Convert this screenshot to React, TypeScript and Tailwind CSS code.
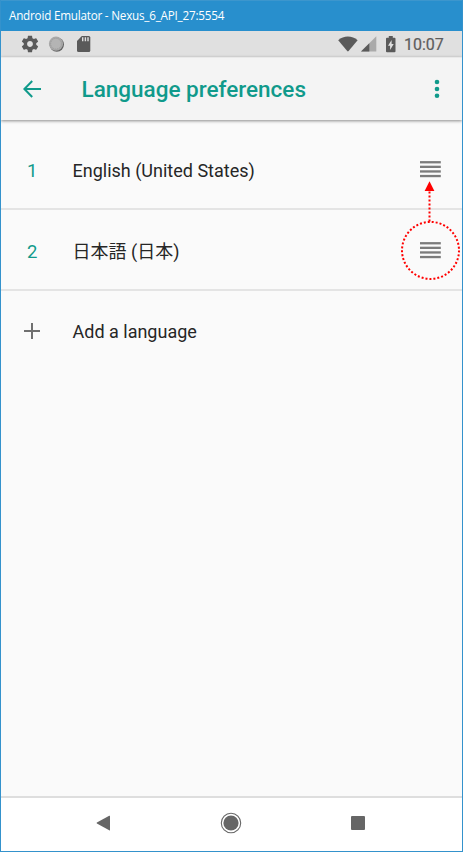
import React from "react";

const roboto = "font-[Roboto,'Noto_Sans_CJK_JP',sans-serif]";

function DragHandle() {
  return (
    <svg className="mb-px h-[17px] w-[22px]" viewBox="0 0 22 17" fill="#7b7b7b">
      <rect x="0" y="0.1" width="20.8" height="2.3" />
      <rect x="0" y="4.7" width="20.8" height="2.3" />
      <rect x="0" y="9.3" width="20.8" height="2.3" />
      <rect x="0" y="13.9" width="20.8" height="2.3" />
    </svg>
  );
}

function LanguageRow({ index, name }: { index: string; name: string }) {
  return (
    <li className="flex h-[81px] items-center border-b-2 border-[#e4e4e4] pr-[20px] pt-[3px]">
      <span className="w-[62.5px] pt-[3px] text-center text-[18.5px] text-[#109a8b]">{index}</span>
      <span className="ml-[9px] flex-1 whitespace-pre pt-px text-[18px] text-[#262626]">{name}</span>
      <DragHandle />
    </li>
  );
}

function StatusBar() {
  return (
    <div className="flex h-[26px] shrink-0 items-center bg-[#e0e0e0] pl-[19px] pr-[15px]">
      <svg className="h-[20px] w-[20px]" viewBox="0 0 24 24" fill="#5a5a5a">
        <path d="M19.43 12.98c.04-.32.07-.64.07-.98s-.03-.66-.07-.98l2.11-1.65c.19-.15.24-.42.12-.64l-2-3.46c-.12-.22-.39-.3-.61-.22l-2.49 1c-.52-.4-1.08-.73-1.69-.98l-.38-2.65C14.46 2.18 14.25 2 14 2h-4c-.25 0-.46.18-.49.42l-.38 2.65c-.61.25-1.17.59-1.69.98l-2.49-1c-.23-.09-.49 0-.61.22l-2 3.46c-.13.22-.07.49.12.64l2.11 1.65c-.04.32-.07.65-.07.98s.03.66.07.98l-2.11 1.65c-.19.15-.24.42-.12.64l2 3.46c.12.22.39.3.61.22l2.49-1c.52.4 1.08.73 1.69.98l.38 2.65c.03.24.24.42.49.42h4c.25 0 .46-.18.49-.42l.38-2.65c.61-.25 1.17-.59 1.69-.98l2.49 1c.23.09.49 0 .61-.22l2-3.46c.12-.22.07-.49-.12-.64l-2.11-1.65zM12 15.5c-1.93 0-3.5-1.57-3.5-3.5s1.57-3.5 3.5-3.5 3.5 1.57 3.5 3.5-1.57 3.5-3.5 3.5z" />
      </svg>
      <svg className="ml-[8px] h-[16px] w-[16px]" viewBox="0 0 16 16">
        <circle cx="8.8" cy="8.6" r="7.2" fill="#626262" />
        <circle cx="8" cy="7.7" r="7.1" fill="#a8a8a8" />
        <circle cx="8" cy="7.7" r="5.3" fill="#b4b4b4" stroke="#999" strokeWidth="0.8" strokeDasharray="1 1" />
      </svg>
      <svg className="ml-[13px] h-[16px] w-[14px]" viewBox="0 0 14 16">
        <path d="M4.8 0h7a1.5 1.5 0 0 1 1.5 1.5v13a1.5 1.5 0 0 1-1.5 1.5H1.5A1.5 1.5 0 0 1 0 14.5V5z" fill="#5a5a5a" />
        <path d="M5.7 1.3v3.9M8.4 1.3v3.9M11 1.3v3.9" stroke="#e0e0e0" strokeWidth="1.4" />
      </svg>
      <span className="flex-1" />
      <svg className="h-[16px] w-[20px]" viewBox="0 0 20 16">
        <path d="M0.2 4.2C5.5-.7 14.3-.7 19.6 4.2L10.6 15.1q-.7.8-1.4 0z" fill="#5a5a5a" />
      </svg>
      <svg className="ml-[3px] h-[16px] w-[16px]" viewBox="0 0 16 16">
        <path d="M15.3.3V15.6H0z" fill="#aaa" />
        <path d="M8.3 7.3v8.3H0z" fill="#5a5a5a" />
      </svg>
      <svg className="ml-[9px] h-[17px] w-[10px]" viewBox="0 0 10 17">
        <path d="M2.8 0h4v1.7h1.7q1 0 1 1v12.5q0 1-1 1H1q-1 0-1-1V2.7q0-1 1-1h1.8z" fill="#5a5a5a" />
        <path d="M5.6 3.9 2 9.8h2.1v4.2l3.6-6H5.6z" fill="#e0e0e0" />
      </svg>
      <span className="ml-[8px] w-[43px] whitespace-nowrap pt-[2px] text-[16px] leading-[20px] text-[#5c5c5c] [-webkit-text-stroke:0.2px_#5c5c5c]">10:07</span>
    </div>
  );
}

export default function App() {
  return (
    <div className={`relative flex h-[852px] w-[463px] flex-col overflow-hidden border-x border-b border-[#3492cc] bg-[#fafafa] ${roboto}`}>
      <header className="flex h-[31px] shrink-0 items-center border-t border-[#3c96cd] bg-[#288fcd] pl-[8px]">
        <span className="whitespace-nowrap font-['Open_Sans',sans-serif] text-[11.7px] tracking-[-0.22px] text-white">Android Emulator - Nexus_6_API_27:5554</span>
      </header>
      <StatusBar />
      <div className="z-10 flex h-[63px] shrink-0 items-center border-t border-[#e9e9e9] bg-[#f4f4f4] shadow-[0_1px_3px_rgba(0,0,0,0.45)]">
        <svg className="ml-[22px] h-[18px] w-[19px]" viewBox="0 0 19 18" fill="none" stroke="#109a8b" strokeWidth="2">
          <path d="M18 9H1.7M9.2 1 1.4 9l7.8 8" />
        </svg>
        <h1 className="ml-[39.5px] flex-1 whitespace-nowrap text-[22.5px] font-medium leading-[28px] text-[#109a8b]">Language preferences</h1>
        <svg className="mr-[22px] h-[20px] w-[6px]" viewBox="0 0 6 20" fill="#109a8b">
          <circle cx="3" cy="3" r="2.3" />
          <circle cx="3" cy="10" r="2.3" />
          <circle cx="3" cy="16.8" r="2.3" />
        </svg>
      </div>
      <main className="flex-1 pt-[9px]">
        <ul>
          <LanguageRow index="1" name="English (United States)" />
          <LanguageRow index="2" name="日本語 (日本)" />
        </ul>
        <button className="flex h-[80px] items-center">
          <svg className="ml-[22px] h-[18px] w-[18px]" viewBox="0 0 18 18" stroke="#6f6f6f" strokeWidth="2">
            <path d="M9 1v16M1 9h16" />
          </svg>
          <span className="ml-[31.5px] pt-px text-[18px] text-[#262626]">Add a language</span>
        </button>
      </main>
      <nav className="flex h-[55px] shrink-0 items-center border-t-2 border-[#dedede] bg-white pb-[3px]">
        <svg className="ml-[95px] h-[16px] w-[14px]" viewBox="0 0 14 16" fill="#666">
          <path d="M14 1.2v13.7q0 .8-.8.4L.9 8.6q-.6-.5 0-1L13.2.8q.8-.4.8.4z" />
        </svg>
        <svg className="ml-[110px] h-[22px] w-[22px]" viewBox="0 0 22 22">
          <circle cx="11" cy="11" r="9.7" fill="none" stroke="#666" strokeWidth="1.1" />
          <circle cx="11" cy="11" r="7.6" fill="#666" />
        </svg>
        <span className="ml-[109px] h-[14px] w-[14px] rounded-[1px] bg-[#666]" />
      </nav>
      <svg className="pointer-events-none absolute left-[399px] top-[180px] z-20 h-[102px] w-[62px]" viewBox="0 0 62 102">
        <circle cx="30.5" cy="70.4" r="28.5" fill="none" stroke="#f00" strokeWidth="2" strokeDasharray="2 1.979" />
        <path d="M29.5 41.5V11" stroke="#f00" strokeWidth="2" strokeDasharray="2 2" />
        <path d="M29.5 1.3 34.4 11H24.6z" fill="#f00" />
      </svg>
    </div>
  );
}
